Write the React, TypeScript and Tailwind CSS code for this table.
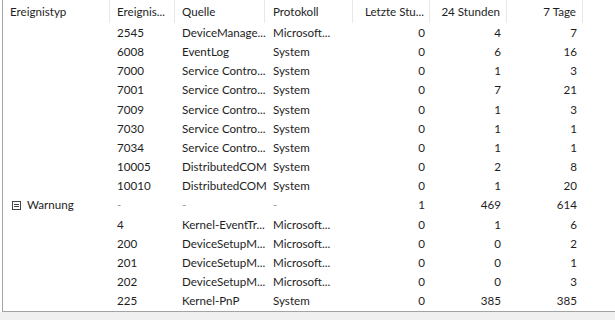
import React from "react";

type Row = {
  typ?: React.ReactNode;
  id: string;
  src: string;
  log: string;
  h: string;
  d: string;
  w: string;
  dim?: boolean;
};

const rows: Row[] = [
  { id: "2545", src: "DeviceManage...", log: "Microsoft...", h: "0", d: "4", w: "7" },
  { id: "6008", src: "EventLog", log: "System", h: "0", d: "6", w: "16" },
  { id: "7000", src: "Service Contro...", log: "System", h: "0", d: "1", w: "3" },
  { id: "7001", src: "Service Contro...", log: "System", h: "0", d: "7", w: "21" },
  { id: "7009", src: "Service Contro...", log: "System", h: "0", d: "1", w: "3" },
  { id: "7030", src: "Service Contro...", log: "System", h: "0", d: "1", w: "1" },
  { id: "7034", src: "Service Contro...", log: "System", h: "0", d: "1", w: "1" },
  { id: "10005", src: "DistributedCOM", log: "System", h: "0", d: "2", w: "8" },
  { id: "10010", src: "DistributedCOM", log: "System", h: "0", d: "1", w: "20" },
  { typ: "warn", id: "-", src: "-", log: "-", h: "1", d: "469", w: "614", dim: true },
  { id: "4", src: "Kernel-EventTr...", log: "Microsoft...", h: "0", d: "1", w: "6" },
  { id: "200", src: "DeviceSetupM...", log: "Microsoft...", h: "0", d: "0", w: "2" },
  { id: "201", src: "DeviceSetupM...", log: "Microsoft...", h: "0", d: "0", w: "1" },
  { id: "202", src: "DeviceSetupM...", log: "Microsoft...", h: "0", d: "0", w: "3" },
  { id: "225", src: "Kernel-PnP", log: "System", h: "0", d: "385", w: "385" },
];

const cols = "grid grid-cols-[107px_65px_90px_88px_77px_77px_76px_1fr]";

function CollapseIcon() {
  return (
    <svg width="9" height="9" viewBox="0 0 9 9" className="mr-[6px] shrink-0">
      <rect x="0.5" y="0.5" width="8" height="8" fill="white" stroke="#444" strokeWidth="1" />
      <line x1="2" y1="3.5" x2="7" y2="3.5" stroke="#444" strokeWidth="1" />
      <line x1="2" y1="5.5" x2="7" y2="5.5" stroke="#444" strokeWidth="1" />
    </svg>
  );
}

export default function App() {
  return (
    <div
      className="w-[615px] h-[320px] bg-[#f0f0f0] flex flex-col overflow-hidden text-[11.6px] text-[#1e1e1e]"
      style={{ fontFamily: 'Lato, "Noto Sans", sans-serif' }}
    >
      <div className="bg-white pl-[2px]">
        <div className="border-l border-b border-[#a3a3a3] bg-white">
          <div className={`${cols} h-[23px] items-center`}>
            <div className="pl-[7px] border-r border-[#e8e8e8] h-full flex items-center">Ereignistyp</div>
            <div className="pl-[7px] border-r border-[#e8e8e8] h-full flex items-center">Ereignis...</div>
            <div className="pl-[7px] border-r border-[#e8e8e8] h-full flex items-center">Quelle</div>
            <div className="pl-[8px] border-r border-[#e8e8e8] h-full flex items-center">Protokoll</div>
            <div className="pr-[5px] border-r border-[#e8e8e8] h-full flex items-center justify-end">Letzte Stu...</div>
            <div className="pr-[6px] border-r border-[#e8e8e8] h-full flex items-center justify-end">24 Stunden</div>
            <div className="pr-[6px] border-r border-[#e8e8e8] h-full flex items-center justify-end">7 Tage</div>
            <div />
          </div>
          {rows.map((r, i) => (
            <div key={i} className={`${cols} h-[19.2px] items-center leading-none`}>
              <div className="pl-[9px] flex items-center">
                {r.typ === "warn" ? (
                  <>
                    <CollapseIcon />
                    <span>Warnung</span>
                  </>
                ) : null}
              </div>
              <div className={`pl-[7px] ${r.dim ? "text-[#9a9a9a]" : ""}`}>{r.id}</div>
              <div className={`pl-[7px] whitespace-nowrap ${r.dim ? "text-[#9a9a9a]" : ""}`}>{r.src}</div>
              <div className={`pl-[8px] whitespace-nowrap ${r.dim ? "text-[#9a9a9a]" : ""}`}>{r.log}</div>
              <div className="pr-[5px] text-right">{r.h}</div>
              <div className="pr-[6px] text-right">{r.d}</div>
              <div className="pr-[6px] text-right">{r.w}</div>
              <div />
            </div>
          ))}
        </div>
      </div>
      <div className="flex-1" />
    </div>
  );
}
